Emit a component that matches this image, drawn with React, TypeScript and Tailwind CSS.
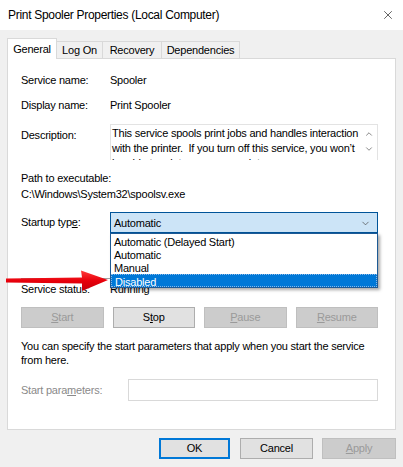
import { ChevronDown, ChevronUp, X } from "lucide-react";

const FONT = "font-['Liberation_Sans',Arial,sans-serif]";

function PanelButton({ label, disabled }: { label: React.ReactNode; disabled?: boolean }) {
  return (
    <div
      className={`flex h-[21px] items-center justify-center border text-[11px] ${
        disabled ? "border-[#bfbfbf] bg-[#cccccc] text-[#9a9a9a]" : "border-[#adadad] bg-[#e1e1e1] text-black"
      }`}
    >
      {label}
    </div>
  );
}

function Arrow() {
  return (
    <svg width="108" height="26" viewBox="0 0 108 26" className="absolute left-[4px] top-[268px] z-30">
      <defs>
        <linearGradient id="red" x1="0" y1="0" x2="0" y2="1">
          <stop offset="0" stopColor="#ff3b3b" />
          <stop offset="0.5" stopColor="#e8000b" />
          <stop offset="1" stopColor="#c30009" />
        </linearGradient>
      </defs>
      <path d="M2 10.5 L78 9.5 L77 2.5 L104 12 L78 23 L78 15.5 L2 14.5 Z" fill="url(#red)" />
    </svg>
  );
}

export default function App() {
  const options = ["Automatic (Delayed Start)", "Automatic", "Manual", "Disabled"];

  return (
    <div
      className={`relative h-[467px] w-[403px] overflow-hidden bg-[#f0f0f0] text-[11px] tracking-[-0.22px] text-black ${FONT}`}
    >
      {/* title bar */}
      <div className="flex h-[30px] items-center justify-between bg-white pl-[8px] pr-[8px]">
        <span className="text-[12px] tracking-[-0.3px]">Print Spooler Properties (Local Computer)</span>
        <X className="h-[14px] w-[14px] text-[#222]" strokeWidth={1.2} />
      </div>

      <div className="ml-[7px] w-[389px] pt-[8px]">
        {/* tabs */}
        <div className="flex h-[20px] items-end">
          <div className="relative z-10 -mb-px flex h-[21px] w-[50px] items-start justify-center border border-b-0 border-[#d9d9d9] bg-white pt-[2px]">
            General
          </div>
          <div className="flex h-[17px] w-[46px] items-center justify-center border border-b-0 border-l-0 border-[#d9d9d9] bg-[#f0f0f0] pt-px">
            Log On
          </div>
          <div className="flex h-[17px] w-[59px] items-center justify-center border border-b-0 border-l-0 border-[#d9d9d9] bg-[#f0f0f0] pt-px">
            Recovery
          </div>
          <div className="flex h-[17px] w-[78px] items-center justify-center border border-b-0 border-l-0 border-[#d9d9d9] bg-[#f0f0f0] pt-px">
            Dependencies
          </div>
        </div>

        {/* panel */}
        <div className="h-[372px] border border-[#d9d9d9] bg-white pl-[13px] pr-[17px] leading-[15px]">
          <div className="mt-[14px] grid grid-cols-[89px_1fr]">
            <span>Service name:</span>
            <span>Spooler</span>
          </div>
          <div className="mt-[10px] grid grid-cols-[89px_1fr]">
            <span>Display name:</span>
            <span>Print Spooler</span>
          </div>
          <div className="mt-[11px] grid grid-cols-[89px_1fr]">
            <span className="pt-[4px]">Description:</span>
            <div className="flex h-[36px] overflow-hidden border border-b-0 border-[#e3e3e3]">
              <div className="flex-1 pl-[1px] pt-px">
                This service spools print jobs and handles interaction with the printer.&nbsp; If you turn off this
                service, you won’t be able to print or see your printers.
              </div>
              <div className="flex w-[16px] flex-col items-center pt-[4px] text-[#606060]">
                <ChevronUp className="h-[10px] w-[10px]" strokeWidth={1.8} />
                <ChevronDown className="mt-[5px] h-[10px] w-[10px]" strokeWidth={1.8} />
              </div>
            </div>
          </div>
          <div className="mt-[10px] leading-[16px]">
            <div>Path to executable:</div>
            <div>C:\Windows\System32\spoolsv.exe</div>
          </div>
          <div className="mt-[10px] grid grid-cols-[89px_1fr] items-center">
            <span>
              Startup typ<span className="underline">e</span>:
            </span>
            <div className="relative">
              <div className="flex h-[21px] items-center justify-between border border-[#005499] bg-[#cce4f7] pl-[3px] pr-[6px] pt-px">
                <span>Automatic</span>
                <ChevronDown className="h-[11px] w-[11px] text-[#444]" strokeWidth={1.5} />
              </div>
              <div className="absolute left-0 right-0 top-full z-20 border border-[#1d5a95] bg-white pt-[1px] shadow-[2px_2px_3px_rgba(0,0,0,0.35)]">
                {options.map((o) => (
                  <div
                    key={o}
                    className={`h-[13px] pl-[3px] leading-[15px] ${
                      o === "Disabled"
                        ? "border border-dotted border-[#8ab8e8] bg-[#0078d7] pl-[2px] leading-[13px] text-white"
                        : ""
                    }`}
                  >
                    {o}
                  </div>
                ))}
              </div>
            </div>
          </div>
          <div className="mt-[45px] h-px bg-[#a0a0a0]" />
          <div className="mt-[3px] grid grid-cols-[89px_1fr]">
            <span>Service status:</span>
            <span>Running</span>
          </div>
          <div className="mt-[10px] grid grid-cols-4 gap-[9px]">
            <PanelButton disabled label={<><span className="underline">S</span>tart</>} />
            <PanelButton label={<>S<span className="underline">t</span>op</>} />
            <PanelButton disabled label={<><span className="underline">P</span>ause</>} />
            <PanelButton disabled label={<><span className="underline">R</span>esume</>} />
          </div>
          <div className="mt-[11px] leading-[14px]">
            You can specify the start parameters that apply when you start the service from here.
          </div>
          <div className="mt-[12px] grid grid-cols-[107px_1fr] items-center">
            <span className="text-[#8a8a8a]">
              Start para<span className="underline">m</span>eters:
            </span>
            <div className="h-[22px] border border-[#d9d9d9] bg-white" />
          </div>
        </div>

        {/* footer */}
        <div className="mt-[8px] flex justify-end">
          <div className="flex h-[21px] w-[71px] items-center justify-center border-2 border-[#0078d7] bg-[#e1e1e1]">OK</div>
          <div className="ml-[10px] flex h-[21px] w-[73px] items-center justify-center border border-[#adadad] bg-[#e1e1e1]">
            Cancel
          </div>
          <div className="ml-[9px] flex h-[21px] w-[74px] items-center justify-center border border-[#bfbfbf] bg-[#cccccc] text-[#9a9a9a]">
            <span>
              <span className="underline">A</span>pply
            </span>
          </div>
        </div>
      </div>

      <Arrow />
    </div>
  );
}
